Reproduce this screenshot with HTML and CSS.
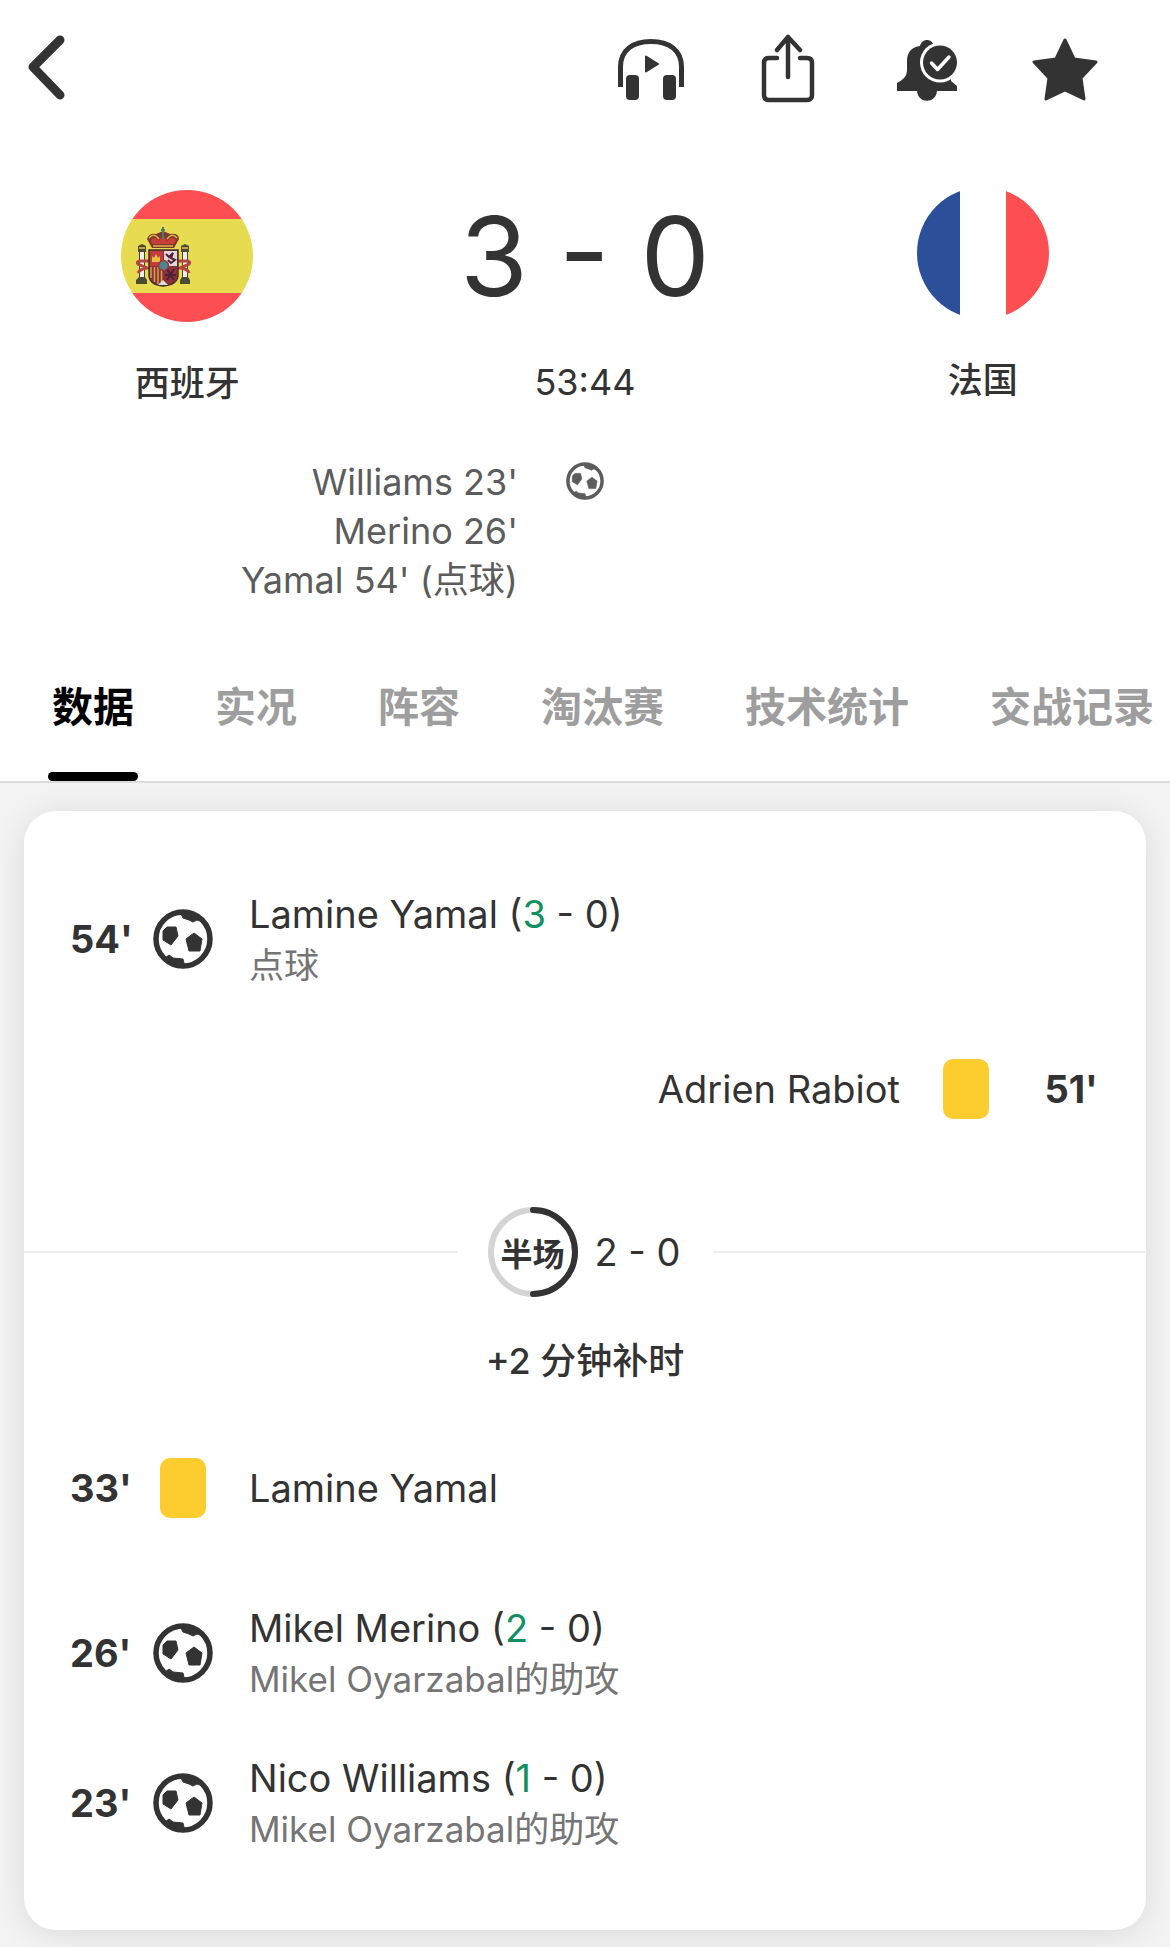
FILE: index.html
```
<!DOCTYPE html>
<html lang="zh-CN">
<head>
    <meta charset="UTF-8">
    <meta name="viewport" content="width=device-width, initial-scale=1.0">
    <title>西班牙 3 - 0 法国</title>
    <link rel="stylesheet" href="styles.css">
</head>
<body>
    <!-- Shared icons -->
    <svg class="sprite" aria-hidden="true">
        <symbol id="ball" viewBox="0 0 60 60">
            <circle cx="30" cy="30" r="27" fill="none" stroke="currentColor" stroke-width="5.500"/>
            <path fill="currentColor" stroke="currentColor" stroke-linejoin="round" d="M10 22 14 18 23 18 25 27 18 36 10 31Z M41 24 49 30 47 42 36 42 33 30Z M27 3 30 9 36 11 40 13 44 11 51 13 42 4Z M12 49 16 46 20 49 30 50 31 54 30 59Z"/>
        </symbol>
    </svg>

    <header class="toolbar">
        <button class="icon-btn" type="button" aria-label="返回">
            <svg viewBox="0 0 72 72"><path d="M50 7 23 34 50 62" fill="none" stroke="currentColor" stroke-width="9" stroke-linecap="round" stroke-linejoin="round"/></svg>
        </button>
        <div class="toolbar-actions">
            <button class="icon-btn" type="button" aria-label="收听">
                <svg viewBox="0 0 72 72">
                    <path d="M5.500 54V34C5.500 17 18 8.500 36 8.500S66.500 17 66.500 34V54" fill="none" stroke="currentColor" stroke-width="5"/>
                    <rect x="11" y="42" width="13" height="25" rx="4" fill="currentColor"/>
                    <rect x="48" y="42" width="13" height="25" rx="4" fill="currentColor"/>
                    <path d="M31 23.500 43 31 31 38.500Z" fill="currentColor" stroke="currentColor" stroke-width="2" stroke-linejoin="round"/>
                </svg>
            </button>
            <button class="icon-btn" type="button" aria-label="分享">
                <svg viewBox="0 0 72 72">
                    <path d="M24 25H16Q11 25 11 30V62Q11 67 16 67H54Q59 67 59 62V30Q59 25 54 25H47M35 44V4M24 17 35 4 47 17" fill="none" stroke="currentColor" stroke-width="4.500" stroke-linecap="round" stroke-linejoin="round"/>
                </svg>
            </button>
            <button class="icon-btn" type="button" aria-label="通知">
                <svg viewBox="0 0 72 72">
                    <path fill="currentColor" d="M29 13C31 5 41 5 43 13L60 30V48L66 53V58H46C45 71 27 71 26 58H6V50C13 46 16 43 16 37V28C16 19 21 14 29 13Z"/>
                    <circle cx="49" cy="29.500" r="20" fill="#fff"/>
                    <circle cx="49" cy="29.500" r="17" fill="currentColor"/>
                    <path d="M40.500 30 46.500 36.500 58 24" fill="none" stroke="#fff" stroke-width="3.500" stroke-linecap="round" stroke-linejoin="round"/>
                </svg>
            </button>
            <button class="icon-btn" type="button" aria-label="收藏">
                <svg viewBox="0 0 72 72"><path d="M36 7 45 26 67 29 52 45 55 66 36 57 17 66 20 45 5 29 27 26Z" fill="currentColor" stroke="currentColor" stroke-width="3" stroke-linejoin="round"/></svg>
            </button>
        </div>
    </header>

    <section class="match">
        <div class="team">
            <svg class="flag" viewBox="0 0 132 132" aria-hidden="true">
                <clipPath id="round"><circle cx="66" cy="66" r="66"/></clipPath>
                <g clip-path="url(#round)">
                    <rect width="132" height="30" fill="#fd4e52"/>
                    <rect y="102" width="132" height="30" fill="#fd4e52"/>
                    <rect y="29" width="132" height="74" fill="#e7db50"/>
                </g>
                <!-- pillars -->
                <g fill="#eee" stroke="#4a4038">
                    <rect x="18.500" y="60.500" width="5" height="28"/>
                    <rect x="61.500" y="60.500" width="5" height="28"/>
                </g>
                <g fill="#4a4a35">
                    <path d="M15 94V90L18 87H24L26 90V94ZM59 94V90L61 87H67L69 90V94Z"/>
                    <path d="M17 62V56L21 54 25 56V62ZM60 62V56L64 54 68 56V62Z"/>
                </g>
                <path d="M28 71H20Q15 71 17 74L26 78Q19 79 17 83M56 71H65Q70 71 68 74L59 78Q67 79 68 83" fill="none" stroke="#b5433f" stroke-width="3"/>
                <path d="M18 58H24M61 58H67" stroke="#c9a23c" stroke-width="2"/>
                <!-- shield -->
                <path d="M28 60H57V86Q56 95 42 96Q29 95 28 86Z" fill="#8d3038" stroke="#43302b" stroke-width="1.500"/>
                <path d="M29 61H42V76H29Z" fill="#c53b3c"/>
                <path d="M43 61H56V76H43Z" fill="#e6d5d8"/>
                <path d="M31 71V66L33 68 35 64 37 68 39 66V72H31Z" fill="#e8c23f"/>
                <path d="M45 64 48 67 52 63 50 68 54 70 50 73 47 70M46 79 53 90M53 79 46 90M44 85H55" fill="none" stroke="#4d2137" stroke-width="2"/>
                <path d="M30 77V88M33.500 77V92M37 77V94M40.500 80V94" stroke="#d0a545" stroke-width="1.500"/>
                <path d="M37 95 42 90 47 95Z" fill="#ddd"/>
                <circle cx="42.500" cy="75.500" r="5" fill="#4d8590" stroke="#9b3a39" stroke-width="1.500"/>
                <!-- crown -->
                <path d="M31 58 26 49Q28 43 35 44L42 41 49 44Q58 43 58 49L53 58Z" fill="#7b3a2c"/>
                <path d="M30 50Q34 45 38 51Q42 43 46 51Q51 45 55 50L53 54H31Z" fill="#c93e39"/>
                <path d="M32 56H52M28 48Q33 42 38 49M46 49Q51 42 56 48" fill="none" stroke="#dfb44a" stroke-width="1.500"/>
                <path d="M42 37V49M40 40H44" stroke="#4d7b70" stroke-width="2"/>
            </svg>
            <div class="team-name">西班牙</div>
        </div>
        <div class="result">
            <h1 class="score">3 - 0</h1>
            <div class="clock">53:44</div>
        </div>
        <div class="team team-away">
            <svg class="flag" viewBox="0 0 132 132" aria-hidden="true">
                <g clip-path="url(#round)">
                    <rect width="43" height="132" fill="#2c4f99"/>
                    <rect x="89" width="43" height="132" fill="#fd4e52"/>
                </g>
            </svg>
            <div class="team-name">法国</div>
        </div>
    </section>

    <section class="scorers">
        <ul class="scorer-list">
            <li>Williams 23'</li>
            <li>Merino 26'</li>
            <li>Yamal 54' (点球)</li>
        </ul>
        <svg class="scorer-ball" aria-hidden="true"><use href="#ball"/></svg>
    </section>

    <nav class="tabs">
        <a class="tab active" href="#data">数据</a>
        <a class="tab" href="#live">实况</a>
        <a class="tab" href="#lineup">阵容</a>
        <a class="tab" href="#knockout">淘汰赛</a>
        <a class="tab" href="#stats">技术统计</a>
        <a class="tab" href="#h2h">交战记录</a>
    </nav>

    <main class="content" id="data">
        <div class="card">
            <div class="event">
                <div class="minute">54'</div>
                <svg class="ball" aria-hidden="true"><use href="#ball"/></svg>
                <div class="detail">
                    <div class="player">Lamine Yamal (<span class="goal">3</span> - 0)</div>
                    <div class="note">点球</div>
                </div>
            </div>
            <div class="event event-away">
                <div class="detail">
                    <div class="player">Adrien Rabiot</div>
                </div>
                <span class="yellow-card"></span>
                <div class="minute">51'</div>
            </div>

            <div class="half-time">
                <div class="half-label">
                    <svg class="ring" viewBox="0 0 90 90" aria-hidden="true">
                        <circle cx="45" cy="45" r="42" fill="none" stroke="#d4d4d4" stroke-width="6"/>
                        <path d="M45 3A42 42 0 0 1 45 87" fill="none" stroke="#333" stroke-width="6" stroke-linecap="round"/>
                    </svg>
                    <span>半场</span>
                </div>
                <div class="half-score">2 - 0</div>
            </div>
            <div class="added-time">+2 分钟补时</div>

            <div class="event">
                <div class="minute">33'</div>
                <span class="yellow-card"></span>
                <div class="detail">
                    <div class="player">Lamine Yamal</div>
                </div>
            </div>
            <div class="event event-spaced">
                <div class="minute">26'</div>
                <svg class="ball" aria-hidden="true"><use href="#ball"/></svg>
                <div class="detail">
                    <div class="player">Mikel Merino (<span class="goal">2</span> - 0)</div>
                    <div class="note">Mikel Oyarzabal的助攻</div>
                </div>
            </div>
            <div class="event">
                <div class="minute">23'</div>
                <svg class="ball" aria-hidden="true"><use href="#ball"/></svg>
                <div class="detail">
                    <div class="player">Nico Williams (<span class="goal">1</span> - 0)</div>
                    <div class="note">Mikel Oyarzabal的助攻</div>
                </div>
            </div>
        </div>
    </main>
</body>
</html>
```
FILE: styles.css
```
* {
    margin: 0;
    padding: 0;
    box-sizing: border-box;
}

body {
    font-family: Inter, "Noto Sans CJK SC", sans-serif;
    background: #fff;
    color: #333;
    overflow-x: hidden;
}

.sprite {
    display: none;
}

/* Top toolbar */
.toolbar {
    display: flex;
    justify-content: space-between;
    align-items: center;
    height: 138px;
    padding: 0 69px 0 10px;
}

.toolbar-actions {
    display: flex;
    gap: 66px;
}

.icon-btn {
    width: 72px;
    height: 72px;
    border: none;
    background: none;
    color: #333;
    cursor: pointer;
}

.icon-btn svg {
    display: block;
    width: 100%;
    height: 100%;
}

/* Teams and score */
.match {
    display: grid;
    grid-template-columns: 1fr 36% 1fr;
    padding-top: 52px;
    text-align: center;
}

.flag {
    display: block;
    width: 132px;
    height: 132px;
    margin: 0 auto 36px;
}

.team-away {
    margin-top: -3px;
}

.team-name {
    font-size: 35px;
    font-weight: 500;
    line-height: 50px;
}

.score {
    font-size: 110px;
    font-weight: 400;
    line-height: 132px;
    margin-bottom: 36px;
}

.clock {
    font-size: 36px;
    line-height: 48px;
}

/* Scorers under the result */
.scorers {
    display: grid;
    grid-template-columns: 1fr 38px 1fr;
    column-gap: 48px;
    padding-top: 50px;
    color: #5c5c5c;
}

.scorer-list {
    list-style: none;
    font-size: 36px;
    line-height: 49px;
    text-align: right;
}

.scorer-ball {
    width: 38px;
    height: 38px;
    margin-top: 4px;
}

/* Tabs */
.tabs {
    display: flex;
    gap: 73px;
    margin-top: 62px;
    padding-left: 48px;
    border-bottom: 2px solid #dcdcdc;
    white-space: nowrap;
}

.tab {
    position: relative;
    height: 114px;
    padding: 0 4px;
    font-size: 41px;
    font-weight: 700;
    line-height: 80px;
    color: #9e9e9e;
    text-decoration: none;
}

.tab.active {
    color: #000;
}

.tab.active::after {
    content: "";
    position: absolute;
    left: 0;
    right: 0;
    bottom: 0;
    height: 9px;
    border-radius: 5px;
    background: #000;
}

/* Timeline */
.content {
    padding: 28px 24px 17px;
    background: #f3f3f3;
}

.card {
    padding: 53px 0 52px;
    border-radius: 32px;
    background: #fff;
    box-shadow: 0 4px 32px rgba(0, 0, 0, 0.1);
}

.event {
    display: grid;
    grid-template-columns: 83px 60px 1fr;
    align-items: center;
    min-height: 150px;
    padding: 0 48px 0 46px;
}

.event-away {
    grid-template-columns: 1fr 60px 102px;
    text-align: right;
}

.event-spaced {
    margin-top: 15px;
}

.minute {
    font-size: 38px;
    font-weight: 700;
}

.ball {
    width: 60px;
    height: 60px;
}

.yellow-card {
    justify-self: center;
    width: 46px;
    height: 60px;
    border-radius: 10px;
    background: #fdcd2f;
}

.detail {
    padding: 0 36px;
}

.player {
    font-size: 38px;
    line-height: 52px;
}

.goal {
    color: #109060;
}

.note {
    font-size: 35px;
    line-height: 50px;
    color: #757575;
}

.half-time {
    display: flex;
    align-items: center;
    height: 176px;
}

.half-time::before,
.half-time::after {
    content: "";
    flex: 1;
    height: 2px;
    background: #eee;
}

.half-label {
    display: grid;
    place-items: center;
    position: relative;
    width: 90px;
    height: 90px;
    margin-left: 30px;
    font-size: 32px;
    font-weight: 700;
}

.ring {
    position: absolute;
    inset: 0;
}

.half-score {
    margin: 0 32px 0 17px;
    font-size: 38px;
}

.added-time {
    margin-bottom: 31px;
    font-size: 36px;
    font-weight: 500;
    line-height: 42px;
    text-align: center;
}
```
